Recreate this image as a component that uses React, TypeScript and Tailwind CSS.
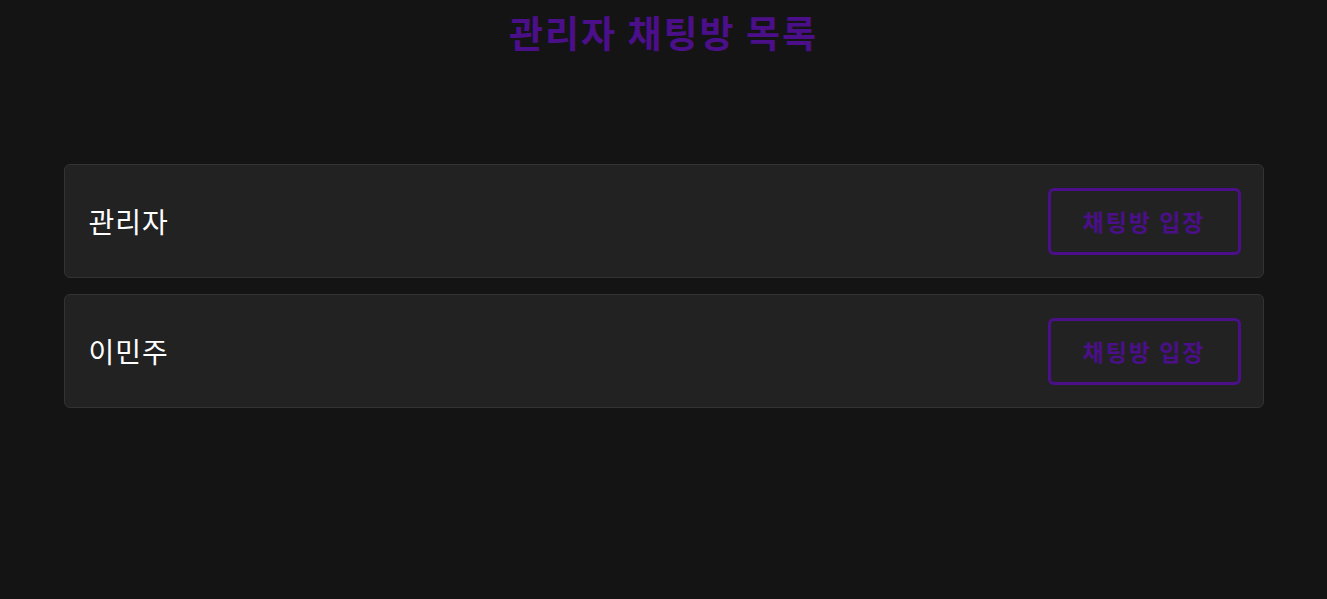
const rooms = [{ name: '관리자' }, { name: '이민주' }]

export default function App() {
  return (
    <div
      className="min-h-[599px] bg-[#141414] text-white"
      style={{ fontFamily: '"Noto Sans CJK KR", "Noto Sans", sans-serif' }}
    >
      <h1 className="pt-[7px] text-center text-[37px] leading-[50px] font-bold tracking-[2px] text-[#4b0f8a]">
        관리자 채팅방 목록
      </h1>

      <div className="mx-auto mt-[107px] flex max-w-[1200px] flex-col gap-4">
        {rooms.map((r) => (
          <div
            key={r.name}
            className="flex h-[114px] items-center justify-between rounded-md border border-[#333] bg-[#222] pl-6 pr-[22px]"
          >
            <span className="text-[28px] tracking-[1px]">{r.name}</span>
            <button className="flex h-[67px] w-[193px] items-center justify-center rounded-md border-[3px] border-[#4b0f8a] text-[23px] font-bold tracking-[2px] text-[#4b0f8a]">
              채팅방 입장
            </button>
          </div>
        ))}
      </div>
    </div>
  )
}
